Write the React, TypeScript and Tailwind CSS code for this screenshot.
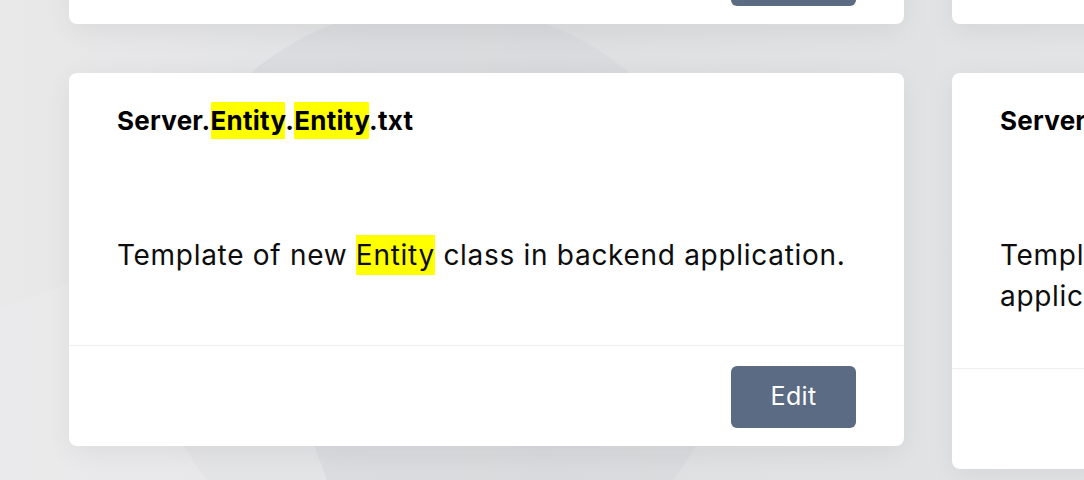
type Part = { text: string; hit?: boolean };

interface TemplateCard {
  id: string;
  title: Part[];
  description: Part[];
}

const cards: TemplateCard[] = [
  {
    id: 'client-entity',
    title: [{ text: 'Client.' }, { text: 'Entity', hit: true }, { text: '.' }, { text: 'Entity', hit: true }, { text: '.txt' }],
    description: [{ text: 'Template of new ' }, { text: 'Entity', hit: true }, { text: ' model in frontend.' }],
  },
  {
    id: 'client-entity-store',
    title: [{ text: 'Client.' }, { text: 'Entity', hit: true }, { text: '.Store.txt' }],
    description: [{ text: 'Template of new ' }, { text: 'Entity', hit: true }, { text: ' store in frontend.' }],
  },
  {
    id: 'server-entity',
    title: [{ text: 'Server.' }, { text: 'Entity', hit: true }, { text: '.' }, { text: 'Entity', hit: true }, { text: '.txt' }],
    description: [{ text: 'Template of new ' }, { text: 'Entity', hit: true }, { text: ' class in backend application.' }],
  },
  {
    id: 'server-entity-service',
    title: [{ text: 'Server.' }, { text: 'Entity', hit: true }, { text: '.Service.txt' }],
    description: [{ text: 'Template of new ' }, { text: 'Entity', hit: true }, { text: ' service class in backend application.' }],
  },
];

function Highlighted({ parts }: { parts: Part[] }) {
  return (
    <>
      {parts.map((p, i) =>
        p.hit ? (
          <span key={i} className="bg-[#ffff00] py-[3px]">
            {p.text}
          </span>
        ) : (
          <span key={i}>{p.text}</span>
        )
      )}
    </>
  );
}

function Card({ card }: { card: TemplateCard }) {
  return (
    <div className="w-[835px] bg-white rounded-lg shadow-[0_6px_28px_rgba(0,0,0,0.06)]">
      <div className="px-12 pt-[29px] pb-[51px] border-b border-[#eeeff1]">
        <h3 className="text-[26px] leading-[37px] font-bold tracking-[0.25px] text-black whitespace-nowrap">
          <Highlighted parts={card.title} />
        </h3>
        <p className="mt-24 min-h-[59px] text-[28px] leading-[41px] tracking-[0.7px] text-[#0d0d0d]">
          <Highlighted parts={card.description} />
        </p>
      </div>
      <div className="flex justify-end px-12 pt-[20px] pb-[18px]">
        <button className="w-[125px] h-[62px] rounded-md bg-[#5b6b84] text-white text-[25px] tracking-[0.3px] hover:bg-[#4e5d74] transition-colors">
          Edit
        </button>
      </div>
    </div>
  );
}

export default function App() {
  return (
    <div
      className="relative h-[480px] w-full overflow-hidden bg-linear-to-r from-[#e9e9ea] via-[#dedfe1] to-[#e3e4e6]"
      style={{ fontFamily: 'Inter, "Open Sans", sans-serif' }}
    >
      <div className="absolute left-[145px] top-[4px] w-[590px] h-[590px] rounded-full bg-[#d6d7da] opacity-60" />
      <div className="absolute left-[-200px] top-[300px] w-[500px] h-[300px] rotate-[-20deg] bg-[#ececed] opacity-50" />
      <div className="relative -mt-[349px] pl-[69px] grid grid-cols-[835px_835px] gap-x-12 gap-y-[49px] items-start">
        {cards.map((c) => (
          <Card key={c.id} card={c} />
        ))}
      </div>
    </div>
  );
}
